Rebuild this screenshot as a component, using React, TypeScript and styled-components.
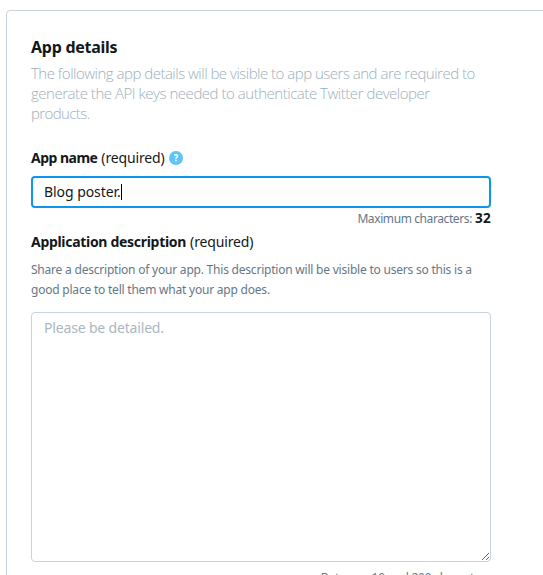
import React from "react";
import styled, { createGlobalStyle } from "styled-components";

const GlobalStyle = createGlobalStyle`
  * { box-sizing: border-box; }
  html, body { margin: 0; background: #fff; overflow: hidden; }
  body { font-family: "Noto Sans", "Open Sans", sans-serif; color: #14171a; }
`;

const Page = styled.main`
  width: 543px;
  height: 575px;
  overflow: hidden;
  padding: 10px 0 0 6px;
`;

const Card = styled.section`
  width: 600px;
  height: 640px;
  border: 1px solid #c8d3dc;
  border-radius: 4px;
  padding: 26px 24px;
`;

const Form = styled.form`
  width: 460px;
  display: flex;
  flex-direction: column;
`;

const Title = styled.h2`
  margin: 0;
  font-size: 16px;
  line-height: 20px;
  letter-spacing: -0.26px;
`;

const Line = styled.span<{ $spacing: number }>`
  display: block;
  white-space: nowrap;
  letter-spacing: ${(p) => p.$spacing}px;
`;

const Intro = styled.p`
  margin: 6px 0 0;
  font-family: "Open Sans", sans-serif;
  font-weight: 300;
  font-size: 15px;
  line-height: 20px;
  color: #a0afba;
`;

const Label = styled.label<{ $top: number; $spacing: number }>`
  display: flex;
  align-items: center;
  margin-top: ${(p) => p.$top}px;
  height: 20px;
  font-size: 14px;
  line-height: 20px;
  letter-spacing: ${(p) => p.$spacing}px;
`;

const Required = styled.span`
  margin-left: 4px;
  letter-spacing: -0.15px;
`;

const HelpIcon = styled.svg`
  width: 14px;
  height: 14px;
  margin-left: 4px;
`;

const NameField = styled.div`
  display: flex;
  align-items: center;
  height: 32px;
  margin-top: 8px;
  padding: 0 11px;
  border: 2px solid #0c96ee;
  border-radius: 4px;
  font-size: 14px;
  line-height: 20px;
  letter-spacing: -0.06px;
`;

const Caret = styled.i`
  width: 1px;
  height: 16px;
  background: #000;
`;

const Hint = styled.div<{ $top: number }>`
  display: flex;
  justify-content: flex-end;
  align-items: baseline;
  margin-top: ${(p) => p.$top}px;
  height: 20px;
  font-size: 12px;
  line-height: 20px;
  color: #657786;
  white-space: pre;
`;

const HintText = styled.span<{ $spacing: number }>`
  letter-spacing: ${(p) => p.$spacing}px;
`;

const Limit = styled.strong`
  margin-left: 3px;
  font-size: 13.5px;
  letter-spacing: 0.3px;
  color: #14171a;
`;

const Description = styled.p`
  margin: 8px 0 0;
  font-size: 12px;
  line-height: 20px;
  color: #657786;
`;

const TextArea = styled.textarea`
  display: block;
  width: 460px;
  height: 250px;
  margin: 12px 0 0;
  padding: 5px 12px;
  border: 1px solid #c8d3dc;
  border-radius: 4px;
  outline: none;
  resize: both;
  font-family: inherit;
  font-size: 14px;
  line-height: 20px;
  letter-spacing: -0.17px;
  color: #14171a;
  &::placeholder { color: #aab8c2; opacity: 1; }
`;

export default function App() {
  return (
    <Page>
      <GlobalStyle />
      <Card>
        <Form>
          <Title>App details</Title>
          <Intro>
            <Line $spacing={-0.5}>The following app details will be visible to app users and are required to</Line>
            <Line $spacing={-0.47}>generate the API keys needed to authenticate Twitter developer</Line>
            <Line $spacing={-0.6}>products.</Line>
          </Intro>
          <Label $top={25} $spacing={-0.52}>
            <strong>App name</strong>
            <Required>(required)</Required>
            <HelpIcon viewBox="0 0 14 14">
              <circle cx="7" cy="7" r="7" fill="#5bc4fb" />
              <path d="M5.3 4.3C6.4 3.4 8.6 3.5 8.6 5c0 1.3-1.7 1.3-1.7 2.7" fill="none" stroke="#fff" strokeWidth="1.5" />
              <circle cx="6.9" cy="9.6" r="1" fill="#fff" />
            </HelpIcon>
          </Label>
          <NameField>
            Blog poster.
            <Caret />
          </NameField>
          <Hint $top={0}>
            <HintText $spacing={-0.4}>Maximum characters:</HintText>
            <Limit>32</Limit>
          </Hint>
          <Label $top={4} $spacing={-0.3}>
            <strong>Application description</strong>
            <Required>(required)</Required>
          </Label>
          <Description>
            <Line $spacing={-0.215}>Share a description of your app. This description will be visible to users so this is a</Line>
            <Line $spacing={-0.215}>good place to tell them what your app does.</Line>
          </Description>
          <TextArea placeholder="Please be detailed." />
          <Hint $top={6}>
            <HintText $spacing={-0.22}>Between 10 and 200 characters</HintText>
          </Hint>
        </Form>
      </Card>
    </Page>
  );
}
